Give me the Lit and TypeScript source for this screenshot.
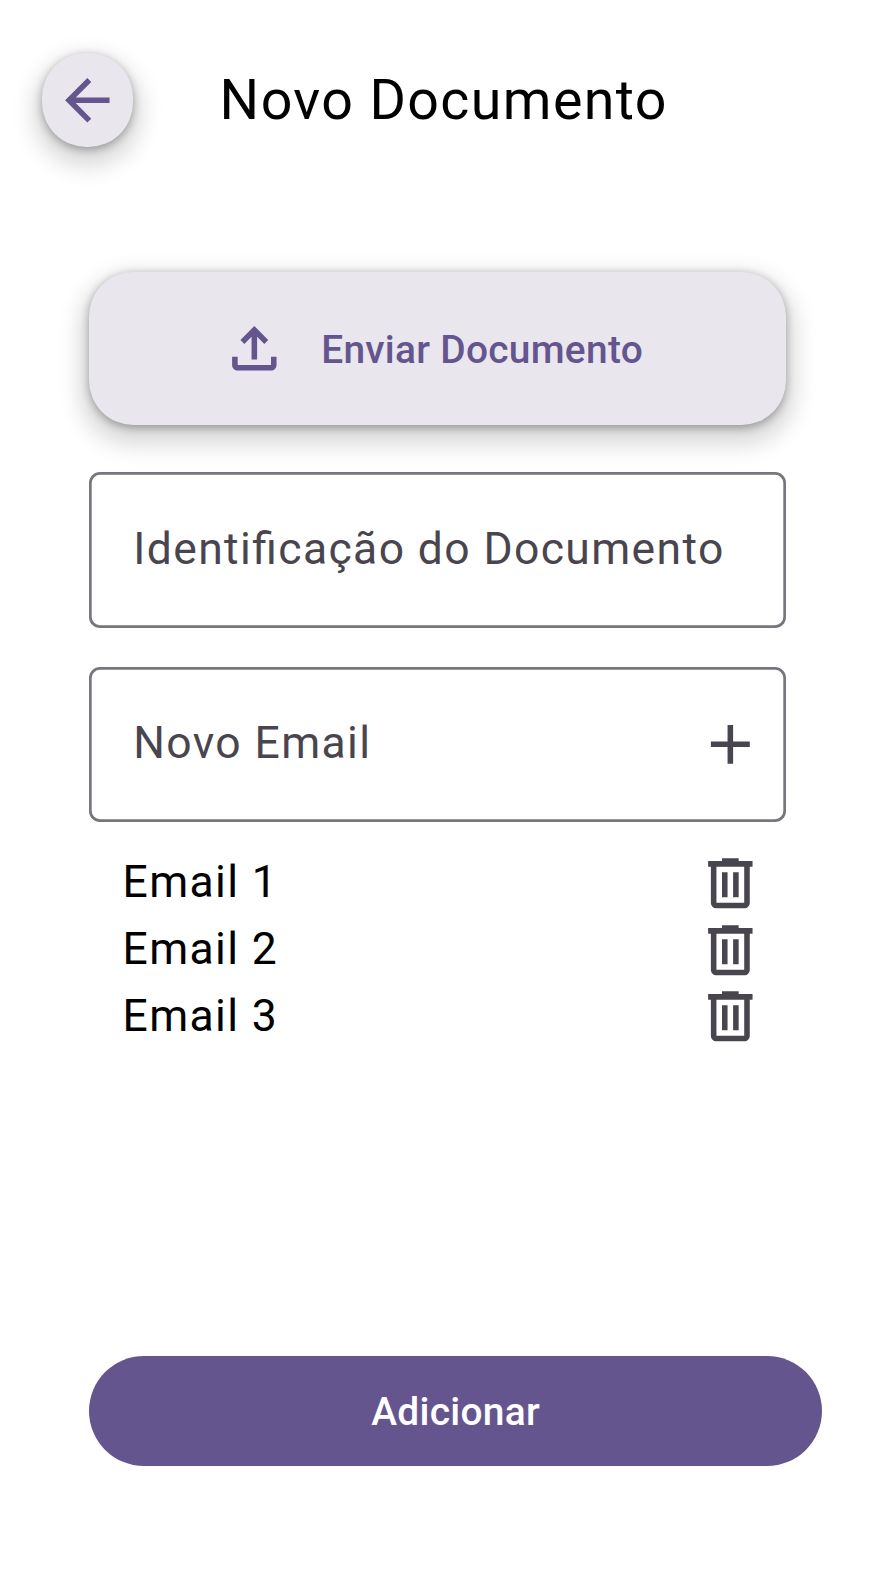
import { LitElement, html, css, svg } from "lit";
import { customElement, property, state } from "lit/decorators.js";

const ICONS = {
  back: "M7.825 13L13.425 18.6L12 20L4 12L12 4L13.425 5.4L7.825 11H20V13H7.825Z",
  upload:
    "M11 16V7.85L8.4 10.45L7 9L12 4L17 9L15.6 10.45L13 7.85V16H11ZM6 20C5.45 20 4.979 19.804 4.588 19.413C4.196 19.021 4 18.55 4 18V15H6V18H18V15H20V18C20 18.55 19.804 19.021 19.413 19.413C19.021 19.804 18.55 20 18 20H6Z",
  add: "M11 13H5V11H11V5H13V11H19V13H13V19H11V13Z",
  trash:
    "M7 21C6.45 21 5.979 20.804 5.588 20.413C5.196 20.021 5 19.55 5 19V6H4V4H9V3H15V4H20V6H19V19C19 19.55 18.804 20.021 18.413 20.413C18.021 20.804 17.55 21 17 21H7ZM17 6H7V19H17V6ZM9 17H11V8H9V17ZM13 17H15V8H13V17Z",
};

@customElement("md-icon")
export class MdIcon extends LitElement {
  @property() name: keyof typeof ICONS = "add";

  static styles = css`
    :host {
      display: block;
      flex: none;
      width: 66.67px;
      height: 66.67px;
    }
    .glyph {
      display: block;
      width: 100%;
      height: 100%;
      fill: currentColor;
    }
  `;

  render() {
    return html`<svg class="glyph" viewBox="0 0 24 24">${svg`<path d=${ICONS[this.name]}></path>`}</svg>`;
  }
}

@customElement("app-root")
export class AppRoot extends LitElement {
  @state() private emails = ["Email 1", "Email 2", "Email 3"];

  static styles = css`
    :host {
      display: flex;
      flex-direction: column;
      box-sizing: border-box;
      width: 889px;
      height: 1578px;
      padding: 52.5px 0 112px;
      overflow: hidden;
      background: #fff;
      color: #000;
      font-family: Roboto, sans-serif;
      font-size: 44.44px;
      letter-spacing: 1.39px;
      font-feature-settings: "liga" 1;
    }
    button {
      box-sizing: border-box;
      margin: 0;
      padding: 0;
      border: 0;
      background: none;
      color: inherit;
      font: inherit;
      letter-spacing: inherit;
    }
    .header {
      display: flex;
      align-items: center;
      padding-left: 41.67px;
      height: 94.5px;
    }
    .back,
    .upload {
      background: #e9e6ed;
      color: #65558f;
      border-radius: 44.4px;
      box-shadow:
        0 2.78px 8.33px rgba(0, 0, 0, 0.3),
        0 11.1px 22.2px 8.33px rgba(0, 0, 0, 0.15);
    }
    .back {
      display: grid;
      place-items: center;
      width: 91.67px;
      height: 94.5px;
      padding-top: 1px;
    }
    .title {
      margin: 0 0 0 86.3px;
      font-size: 55.56px;
      font-weight: 400;
      line-height: 66px;
    }
    .form {
      display: flex;
      flex-direction: column;
      width: 697.3px;
      margin: 125.2px 0 0 88.9px;
    }
    .upload {
      display: flex;
      align-items: center;
      gap: 33.6px;
      height: 152.8px;
      padding-left: 132px;
      font-size: 38.89px;
      font-weight: 500;
      letter-spacing: 0.28px;
    }
    .label {
      padding-top: 2px;
    }
    .field {
      display: flex;
      align-items: center;
      justify-content: space-between;
      box-sizing: border-box;
      height: 155.6px;
      margin-top: 47.3px;
      padding: 0 22.3px 0 44.4px;
      border-radius: 11.1px;
      box-shadow: inset 0 0 0 2.7px #79747e;
      color: #49454f;
    }
    .field + .field {
      margin-top: 38.8px;
    }
    .text {
      padding-bottom: 2px;
      white-space: nowrap;
    }
    .list {
      margin: 27.7px 0 0;
      padding: 0 22.3px 0 33.6px;
      list-style: none;
    }
    .row {
      display: flex;
      align-items: center;
      justify-content: space-between;
      height: 66.67px;
    }
    .remove {
      color: #49454f;
    }
    .submit {
      width: 733.4px;
      height: 110px;
      margin: auto 0 0 88.9px;
      border-radius: 55.6px;
      background: #65558f;
      color: #fff;
      font-size: 38.89px;
      font-weight: 500;
      letter-spacing: 0.28px;
    }
  `;

  private remove(index: number) {
    this.emails = this.emails.filter((_, i) => i !== index);
  }

  render() {
    return html`
      <header class="header">
        <button class="back"><md-icon name="back"></md-icon></button>
        <h1 class="title">Novo Documento</h1>
      </header>
      <main class="form">
        <button class="upload"><md-icon name="upload"></md-icon><span class="label">Enviar Documento</span></button>
        <div class="field"><span class="text">Identificação do Documento</span></div>
        <div class="field">
          <span class="text">Novo Email</span>
          <button><md-icon name="add"></md-icon></button>
        </div>
        <ul class="list">
          ${this.emails.map(
            (email, i) => html`
              <li class="row">
                <span class="text">${email}</span>
                <button class="remove" @click=${() => this.remove(i)}><md-icon name="trash"></md-icon></button>
              </li>
            `
          )}
        </ul>
      </main>
      <button class="submit">Adicionar</button>
    `;
  }
}
